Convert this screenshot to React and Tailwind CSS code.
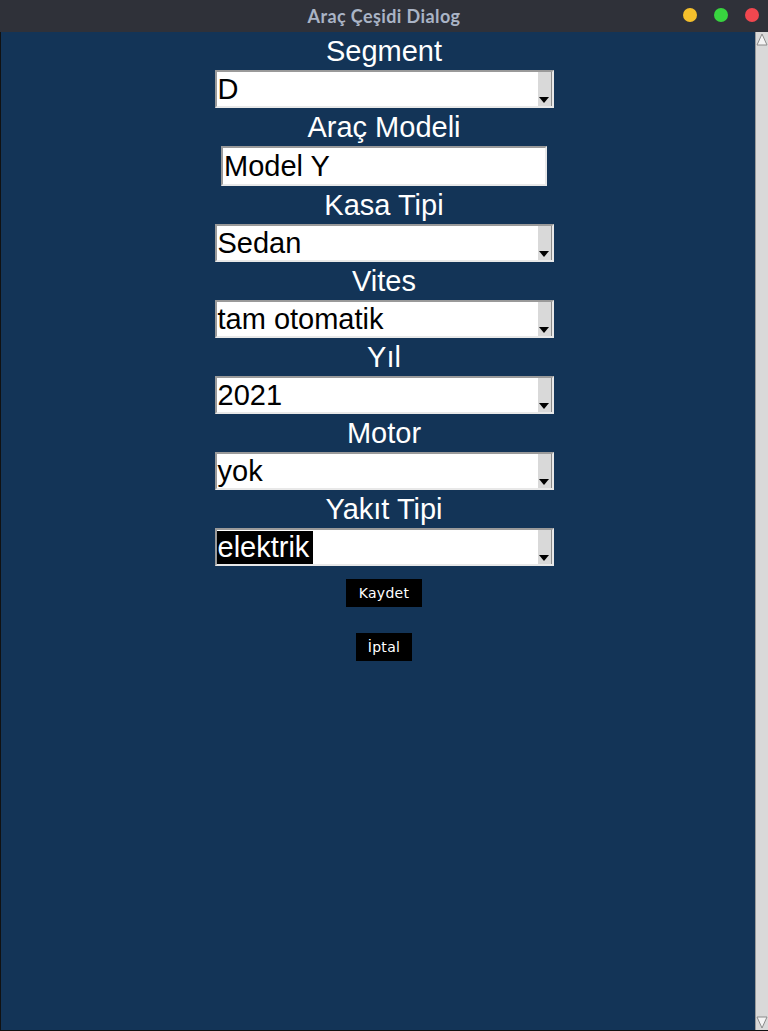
import React from 'react';

const FIELDS = [
  { label: 'Segment', value: 'D', kind: 'combo' },
  { label: 'Araç Modeli', value: 'Model Y', kind: 'entry' },
  { label: 'Kasa Tipi', value: 'Sedan', kind: 'combo' },
  { label: 'Vites', value: 'tam otomatik', kind: 'combo' },
  { label: 'Yıl', value: '2021', kind: 'combo' },
  { label: 'Motor', value: 'yok', kind: 'combo' },
  { label: 'Yakıt Tipi', value: 'elektrik', kind: 'combo', selected: true },
];

function Combo({ value, selected }) {
  return (
    <div className="flex w-[339px] h-[38px] bg-white border-2 border-t-[#9a9a9a] border-l-[#9a9a9a] border-b-[#e8e8e8] border-r-[#e8e8e8]">
      <div className="flex-1 flex items-center overflow-hidden">
        <span
          className={`font-['Liberation_Sans',sans-serif] text-[29px] leading-[33px] pl-[1px] ${
            selected ? 'bg-black text-white pr-[4px]' : 'text-black'
          }`}
        >
          {value}
        </span>
      </div>
      <div className="w-[14px] h-full bg-[#d9d9d9] border-r border-[#8a8a8a] flex flex-col justify-end items-center pb-[3px]">
        <svg width="10" height="6" viewBox="0 0 10 6">
          <path d="M0 0 H10 L5 6 Z" fill="#000" />
        </svg>
      </div>
    </div>
  );
}

function Entry({ value }) {
  return (
    <div className="w-[326px] h-[40px] bg-white border-2 border-t-[#9a9a9a] border-l-[#9a9a9a] border-b-[#e8e8e8] border-r-[#e8e8e8] flex items-center pl-[1px]">
      <span className="font-['Liberation_Sans',sans-serif] text-[29px] text-black leading-[33px]">{value}</span>
    </div>
  );
}

function ScrollArrow({ up }) {
  return (
    <svg width="12" height="13" viewBox="0 0 12 13">
      {up ? (
        <path d="M6 1 L11 12 H1 Z" fill="#f4f4f4" stroke="#8a8a8a" strokeWidth="1" />
      ) : (
        <path d="M1 1 H11 L6 12 Z" fill="#f4f4f4" stroke="#8a8a8a" strokeWidth="1" />
      )}
    </svg>
  );
}

export default function App() {
  return (
    <div className="w-[768px] h-[1031px] flex flex-col bg-[#2f3139] overflow-hidden">
      {/* title bar */}
      <div className="h-[32px] relative flex items-center justify-center shrink-0">
        <span className="font-['Lato',sans-serif] font-bold text-[18px] text-[#aab4c6] tracking-[0.4px]">
          Araç Çeşidi Dialog
        </span>
        <div className="absolute right-[9px] top-[8px] flex gap-[17px]">
          <span className="w-[14px] h-[14px] rounded-full bg-[#f5c02c]" />
          <span className="w-[14px] h-[14px] rounded-full bg-[#38d43f]" />
          <span className="w-[14px] h-[14px] rounded-full bg-[#f1474f]" />
        </div>
      </div>

      <div className="flex-1 flex border-l border-b border-[#111] bg-[#133457]">
        <div className="flex-1 flex flex-col items-center pt-[4px] pl-[12px] gap-[4px]">
          {FIELDS.map((f) => (
            <React.Fragment key={f.label}>
              <div className="h-[30px] pt-[2px] flex items-center font-['Liberation_Sans',sans-serif] text-[29px] text-white">
                {f.label}
              </div>
              {f.kind === 'combo' ? <Combo value={f.value} selected={f.selected} /> : <Entry value={f.value} />}
            </React.Fragment>
          ))}
          <button className="mt-[9px] h-[28px] w-[76px] bg-black text-white font-['DejaVu_Sans',sans-serif] text-[14px] tracking-[0.3px]">
            Kaydet
          </button>
          <button className="mt-[22px] h-[28px] w-[56px] bg-black text-white font-['DejaVu_Sans',sans-serif] text-[14px] tracking-[0.3px]">
            İptal
          </button>
        </div>

        {/* scrollbar */}
        <div className="w-[13px] bg-[#d9d9d9] border-l border-[#9a9a9a] flex flex-col justify-between items-center py-[1px]">
          <ScrollArrow up />
          <ScrollArrow />
        </div>
      </div>
    </div>
  );
}
